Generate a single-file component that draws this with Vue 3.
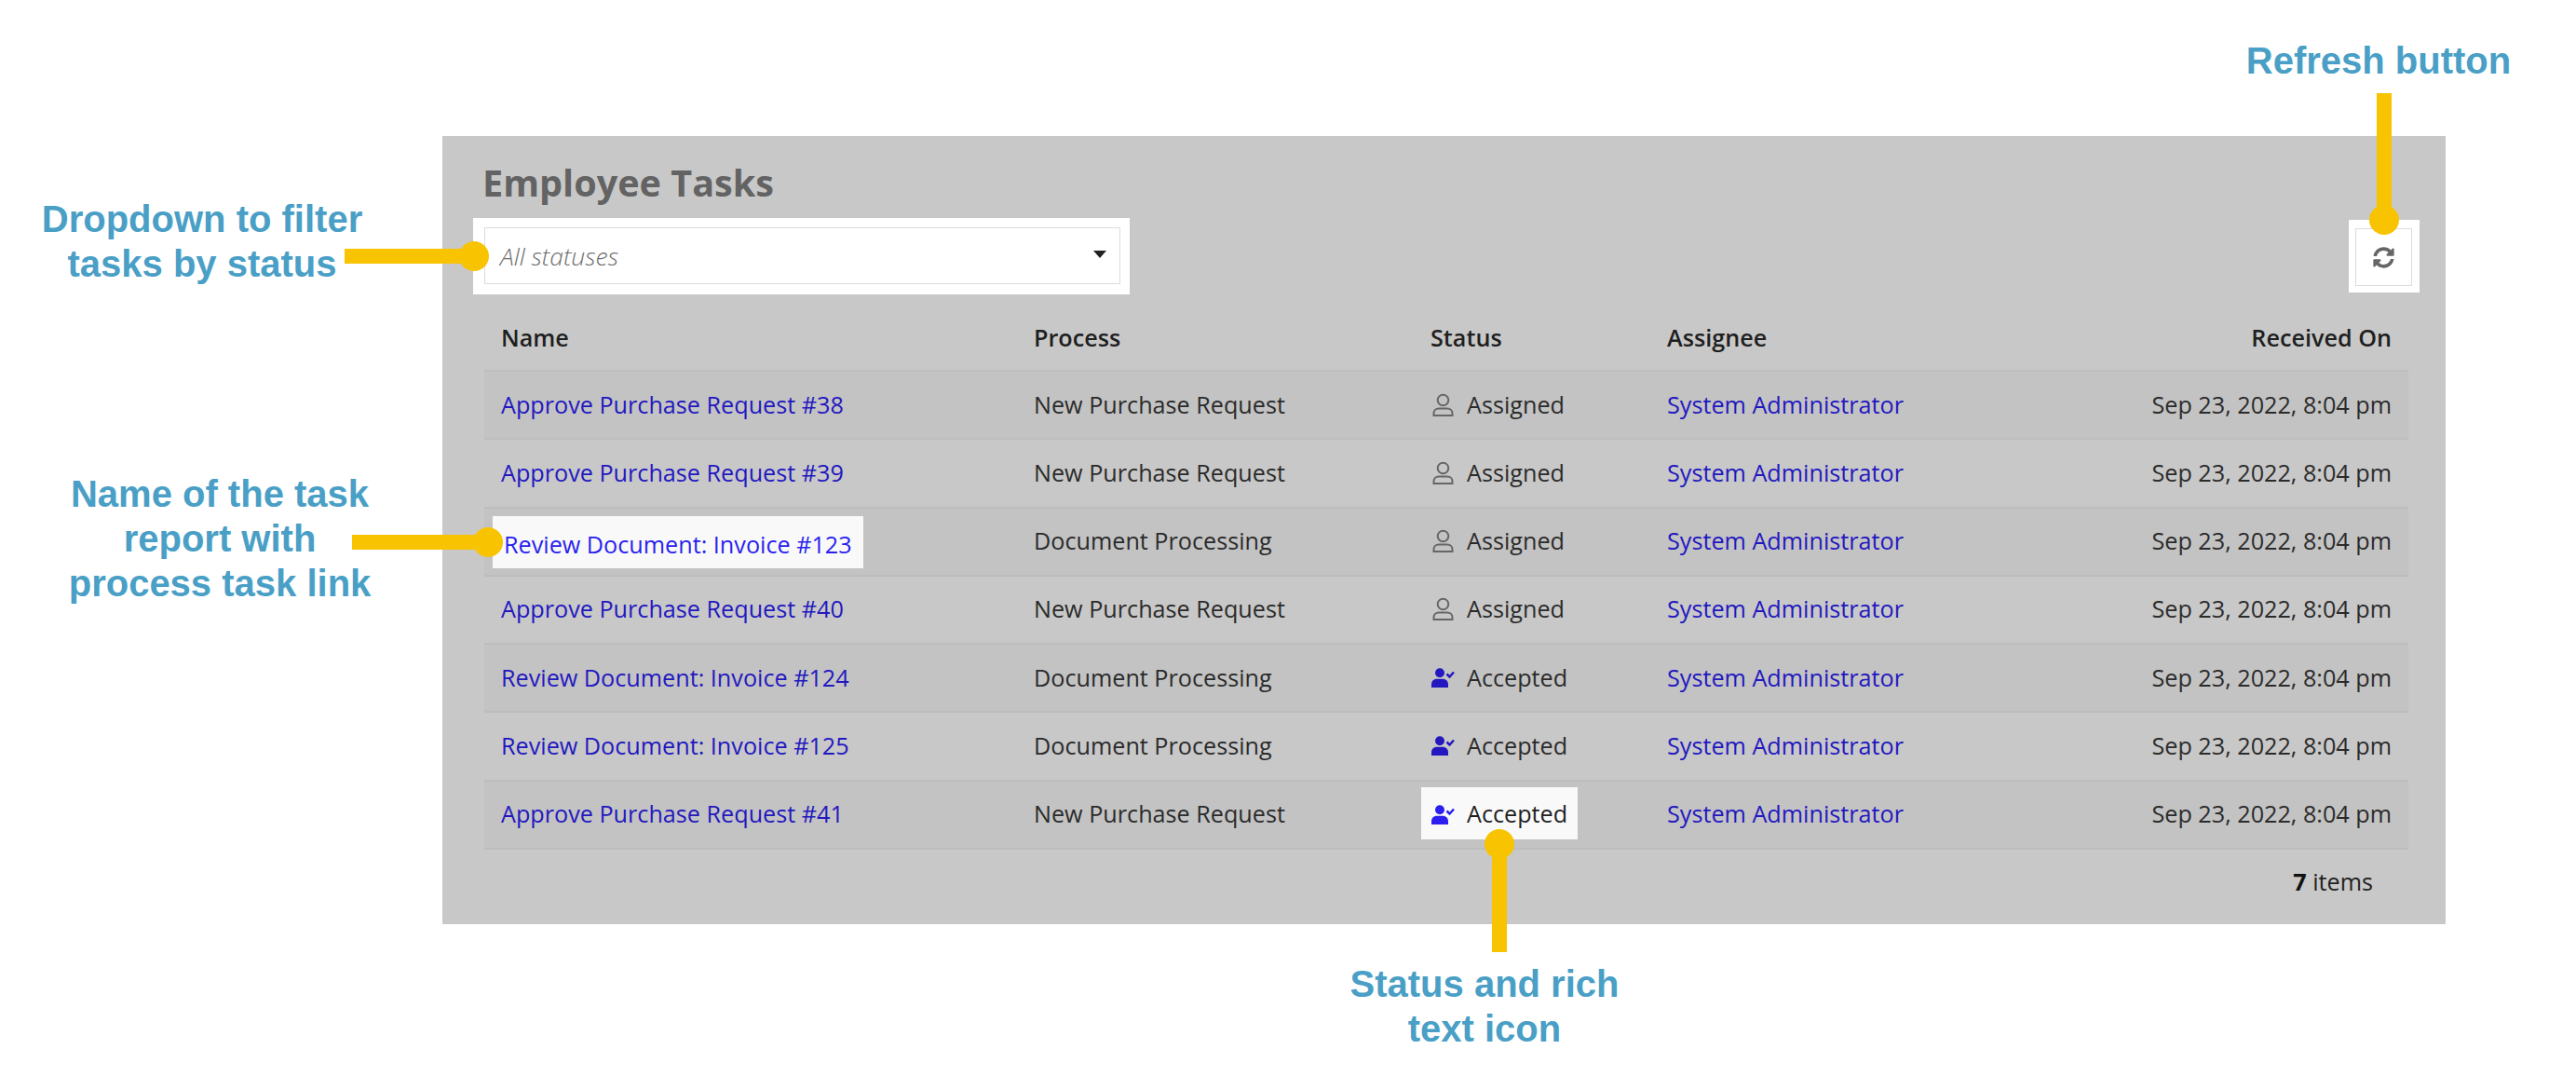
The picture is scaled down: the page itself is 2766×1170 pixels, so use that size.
<script setup>
const tasks = [
  { name: "Approve Purchase Request #38", process: "New Purchase Request", status: "Assigned" },
  { name: "Approve Purchase Request #39", process: "New Purchase Request", status: "Assigned" },
  { name: "Review Document: Invoice #123", process: "Document Processing", status: "Assigned", markName: true },
  { name: "Approve Purchase Request #40", process: "New Purchase Request", status: "Assigned" },
  { name: "Review Document: Invoice #124", process: "Document Processing", status: "Accepted" },
  { name: "Review Document: Invoice #125", process: "Document Processing", status: "Accepted" },
  { name: "Approve Purchase Request #41", process: "New Purchase Request", status: "Accepted", markStatus: true },
];
</script>

<template>
  <div class="page">
    <section class="panel">
      <h1 class="title">Employee Tasks</h1>

      <div class="filters">
        <div class="frame select-frame">
          <div class="select">
            <span class="placeholder">All statuses</span>
            <span class="caret"></span>
          </div>
        </div>
        <div class="frame refresh-frame">
          <button class="refresh" type="button" aria-label="Refresh">
            <svg viewBox="0 0 512 512" width="23" height="23">
              <path fill="#666" d="M370.72 133.28C339.458 104.008 298.888 87.962 255.848 88c-77.458.068-144.328 53.178-162.791 126.85-1.344 5.363-6.122 9.15-11.651 9.15H24.103c-7.498 0-13.194-6.807-11.807-14.176C33.933 94.924 134.813 8 256 8c66.448 0 126.791 26.136 171.315 68.685L463.03 40.97C478.149 25.851 504 36.559 504 57.941V192c0 13.255-10.745 24-24 24H345.941c-21.382 0-32.09-25.851-16.971-40.971l41.75-41.749zM32 296h134.059c21.382 0 32.09 25.851 16.971 40.971l-41.75 41.75c31.262 29.273 71.835 45.319 114.876 45.28 77.418-.07 144.315-53.144 162.787-126.849 1.344-5.363 6.122-9.15 11.651-9.15h57.304c7.498 0 13.194 6.807 11.807 14.176C478.067 417.076 377.187 504 256 504c-66.448 0-126.791-26.136-171.315-68.685L48.97 471.03C33.851 486.149 8 475.441 8 454.059V320c0-13.255 10.745-24 24-24z" />
            </svg>
          </button>
        </div>
      </div>

      <div class="table">
        <div class="row head">
          <span>Name</span>
          <span>Process</span>
          <span>Status</span>
          <span>Assignee</span>
          <span class="right">Received On</span>
        </div>
        <div v-for="task in tasks" :key="task.name" class="row item">
          <span>
            <a class="link" :class="{ 'mark-name': task.markName }">{{ task.name }}</a>
          </span>
          <span>{{ task.process }}</span>
          <span class="status" :class="{ 'mark-status': task.markStatus }">
            <svg v-if="task.status === 'Assigned'" class="icon" viewBox="0 0 25 26" width="25" height="26">
              <circle cx="12.5" cy="7.5" r="5.8" fill="none" stroke="#666" stroke-width="2" />
              <path fill="none" stroke="#666" stroke-width="2" d="M8 16.5h9c3.2 0 5.5 2.3 5.5 5.2v2.3H2.500v-2.300c0-2.900 2.300-5.200 5.500-5.200z" />
            </svg>
            <svg v-else class="icon" viewBox="0 0 25 21" width="25" height="21">
              <circle cx="9" cy="5.200" r="5" class="accent-fill" />
              <path class="accent-fill" d="M0 21v-3.500C0 14.200 2.500 11.800 5.800 11.800h6.400c3.300 0 5.800 2.400 5.800 5.700V21z" />
              <path class="accent-line" d="M16.500 6.500l3 3 4.500-5" />
            </svg>
            {{ task.status }}
          </span>
          <span><a class="link">System Administrator</a></span>
          <span class="right">Sep 23, 2022, 8:04 pm</span>
        </div>
      </div>

      <p class="count"><b>7</b> items</p>
    </section>

    <div class="note note-filter">Dropdown to filter<br />tasks by status</div>
    <div class="pointer h pointer-filter"></div>
    <div class="dot dot-filter"></div>

    <div class="note note-name">Name of the task<br />report with<br />process task link</div>
    <div class="pointer h pointer-name"></div>
    <div class="dot dot-name"></div>

    <div class="note note-status">Status and rich<br />text icon</div>
    <div class="pointer v pointer-status"></div>
    <div class="dot dot-status"></div>

    <div class="note note-refresh">Refresh button</div>
    <div class="pointer v pointer-refresh"></div>
    <div class="dot dot-refresh"></div>
  </div>
</template>

<style scoped>
.page {
  position: relative;
  width: 2766px;
  height: 1170px;
  padding: 146px 0 0 475px;
  box-sizing: border-box;
  background: #fff;
  overflow: hidden;
  font-family: "Open Sans", sans-serif;
  font-size: 25.2px;
  color: #2b2b2b;
}

.panel {
  width: 2151px;
  height: 846px;
  padding: 23px 28px 0 33px;
  box-sizing: border-box;
  background: #c8c8c8;
}

.title {
  margin: 0 0 11px 10px;
  font-size: 39.6px;
  line-height: 54px;
  font-weight: 700;
  color: #636363;
}

.filters {
  display: flex;
  justify-content: space-between;
  align-items: center;
}

.frame {
  background: #fff;
  box-sizing: border-box;
}

.select-frame {
  width: 705px;
  height: 82px;
  padding: 10px 10px 11px 12px;
}

.select {
  display: flex;
  justify-content: space-between;
  align-items: center;
  height: 100%;
  padding: 0 14px 0 16px;
  box-sizing: border-box;
  border: 1px solid #dcdcdc;
}

.placeholder {
  font-size: 26.5px;
  font-style: italic;
  font-weight: 300;
  color: #6e6e6e;
}

.caret {
  border-left: 7px solid transparent;
  border-right: 7px solid transparent;
  border-top: 8px solid #222;
  margin-top: -4px;
}

.refresh-frame {
  width: 76px;
  height: 78px;
  padding: 9px 8px 7px 7px;
}

.refresh {
  display: flex;
  justify-content: center;
  align-items: center;
  width: 100%;
  height: 100%;
  padding: 0;
  background: #fff;
  border: 1px solid #dcdcdc;
}

.table {
  width: 2066px;
  margin-left: 12px;
}

.row {
  display: grid;
  grid-template-columns: 572px 426px 254px 1fr auto;
  align-items: center;
  padding: 0 18px;
}

.head {
  height: 81px;
  align-items: end;
  padding-bottom: 18px;
  box-sizing: border-box;
  font-weight: 600;
  line-height: 33px;
  color: #1f1f1f;
}

.item {
  height: 73.25px;
  padding-bottom: 2px;
  box-sizing: border-box;
  border-top: 2px solid #bdbdbd;
}

.item:nth-child(even) {
  background: #c3c3c3;
}

.item:last-child {
  height: 75px;
  border-bottom: 2px solid #bdbdbd;
}

.right {
  text-align: right;
}

.link {
  color: #2318c0;
}

.status {
  display: flex;
  align-items: center;
  gap: 13px;
  margin-left: 1px;
}

.icon {
  flex: none;
  margin-top: 2px;
}

.accent-fill {
  fill: #2318c0;
}

.accent-line {
  fill: none;
  stroke: #2318c0;
  stroke-width: 2.500;
}

.mark-name {
  display: inline-flex;
  align-items: center;
  height: 56px;
  margin: 4px 0 0 -9px;
  padding: 3px 12px 0;
  box-sizing: border-box;
  background: #f9f9f9;
  color: #2a1ff0;
}

.mark-status {
  width: 168px;
  height: 56px;
  margin: 0 0 0 -10px;
  padding-left: 11px;
  box-sizing: border-box;
  background: #f9f9f9;
  color: #1f1f1f;
}

.mark-status .accent-fill {
  fill: #2a1ff0;
}

.mark-status .accent-line {
  stroke: #2a1ff0;
}

.count {
  margin: 0 0 0 12px;
  padding: 18px 38px 0 0;
  width: 2066px;
  box-sizing: border-box;
  text-align: right;
  line-height: 33px;
  color: #222;
}

.count b {
  color: #111;
}

.note {
  position: absolute;
  font-family: "Liberation Sans", Arial, sans-serif;
  font-size: 40px;
  font-weight: 700;
  line-height: 48px;
  text-align: center;
  white-space: nowrap;
  color: #4a9fc6;
  transform: translateX(-50%);
}

.note-filter {
  left: 217px;
  top: 211px;
}

.note-name {
  left: 236px;
  top: 506px;
}

.note-status {
  left: 1594px;
  top: 1032px;
}

.note-refresh {
  left: 2554px;
  top: 41px;
}

.pointer {
  position: absolute;
  background: #f8c300;
}

.pointer.h {
  height: 16px;
}

.pointer.v {
  width: 16px;
}

.pointer-filter {
  left: 370px;
  top: 267px;
  width: 140px;
}

.pointer-name {
  left: 378px;
  top: 574px;
  width: 146px;
}

.pointer-status {
  left: 1602px;
  top: 906px;
  height: 116px;
}

.pointer-refresh {
  left: 2552px;
  top: 100px;
  height: 136px;
}

.dot {
  position: absolute;
  width: 32px;
  height: 32px;
  border-radius: 50%;
  background: #f8c300;
}

.dot-filter {
  left: 493px;
  top: 259px;
}

.dot-name {
  left: 508px;
  top: 566px;
}

.dot-status {
  left: 1594px;
  top: 890px;
}

.dot-refresh {
  left: 2544px;
  top: 220px;
}
</style>
